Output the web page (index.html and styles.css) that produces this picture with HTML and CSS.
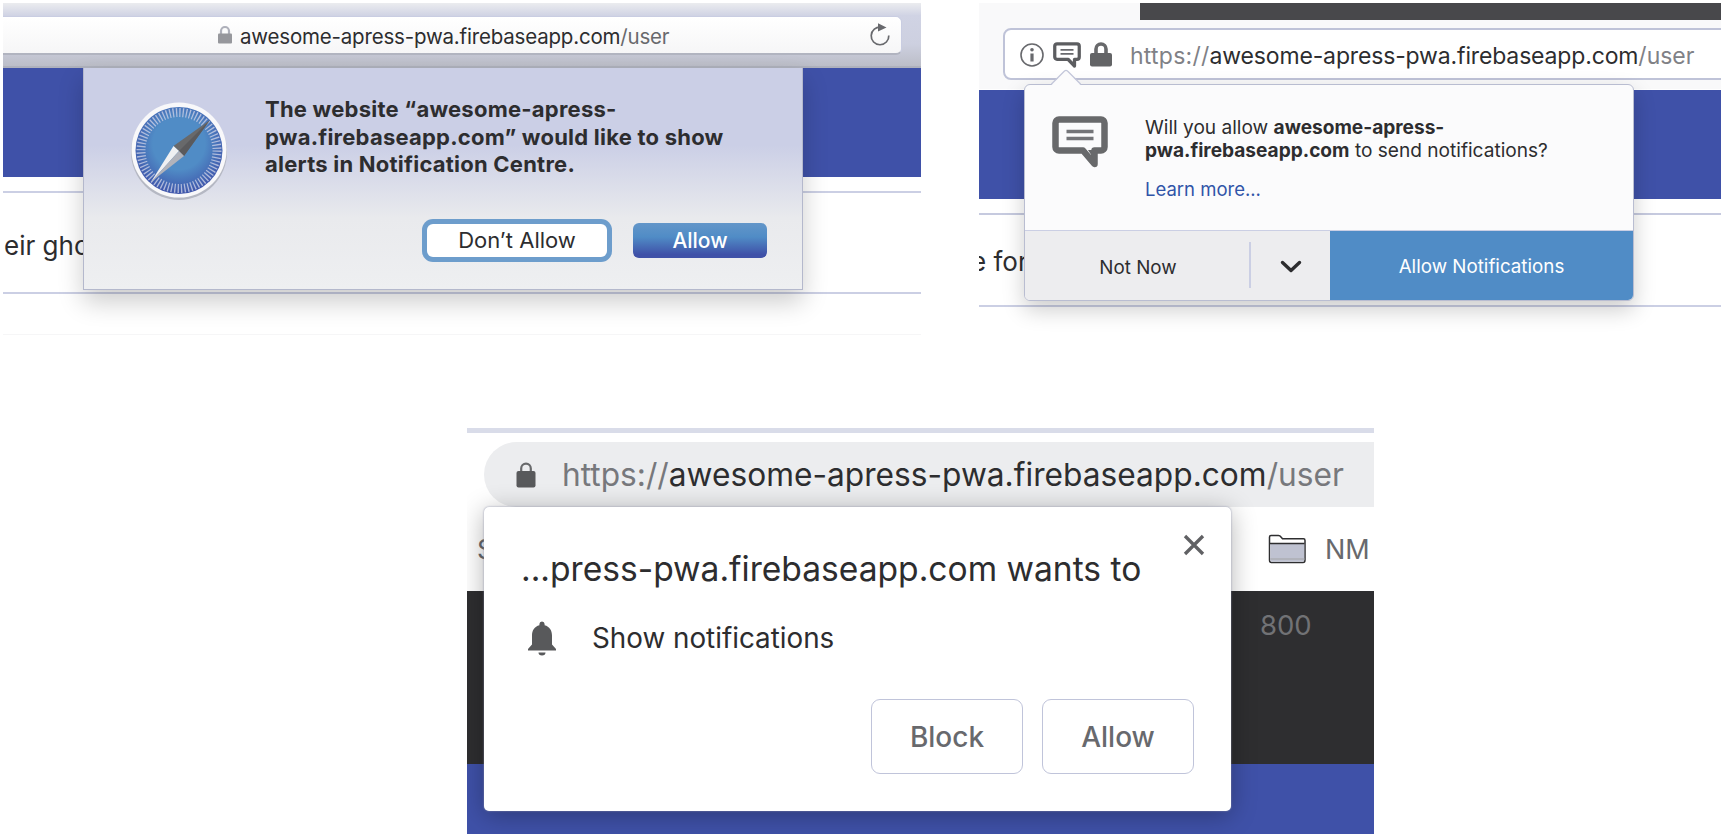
FILE: index.html
```html
<!DOCTYPE html>
<html lang="en">
<head>
<meta charset="utf-8">
<title>Notification permission prompts</title>
<link rel="stylesheet" href="styles.css">
</head>
<body>
<main class="page">
  <div class="row">
    <section class="safari">
      <header class="sf-toolbar">
        <div class="sf-field">
          <svg class="sf-lock" width="16" height="20" viewBox="0 0 16 20"><path d="M4 10V6a4 4 0 0 1 8 0v4" fill="none" stroke="#aeb0ba" stroke-width="2.2"/><rect x="1" y="8.5" width="14" height="10" rx="1" fill="#96979c"/></svg>
          <span class="sf-url">awesome-apress-pwa.firebaseapp.com<i>/user</i></span>
          <svg class="sf-reload" width="22" height="24" viewBox="0 0 22 24"><path d="M12 4.200A8.800 8.800 0 1 0 19.800 12.500" fill="none" stroke="#68696d" stroke-width="1.700"/><path d="M9 .2V8.400L17.500 4.600z" fill="#68696d"/></svg>
        </div>
      </header>
      <div class="sf-banner"></div>
      <div class="sf-card"><span>eir gho</span></div>
      <div class="sf-end"></div>
      <div class="sf-dialog">
        <svg class="compass" width="100" height="104" viewBox="0 0 100 104">
          <defs><radialGradient id="dial" cx=".5" cy=".42" r=".6"><stop offset=".5" stop-color="#508cc6"/><stop offset="1" stop-color="#3d50a8"/></radialGradient></defs>
          <circle cx="50" cy="52" r="48" fill="#b5b8c3"/>
          <circle cx="50" cy="50" r="47.500" fill="#f8f8fa"/>
          <circle cx="50" cy="50.500" r="43.500" fill="url(#dial)"/>
          <circle cx="50" cy="50.500" r="38" fill="none" stroke="#c9cee5" stroke-width="9" stroke-dasharray="1.300 2.016" opacity=".8"/>
          <path d="M81 20 44.500 46 55 56z" fill="#68696b"/>
          <path d="M81 20 50 51 55 56z" fill="#5a5a5d"/>
          <path d="M22 82 44.500 46 50 51z" fill="#eff0f2"/>
          <path d="M22 82 50 51 55 56z" fill="#b1b3bb"/>
        </svg>
        <div class="sf-body">
          <p>The website “awesome-apress-<br>pwa.firebaseapp.com” would like to show<br>alerts in Notification Centre.</p>
          <div class="sf-actions"><button class="sf-deny">Don’t Allow</button><button class="sf-allow">Allow</button></div>
        </div>
      </div>
    </section>

    <section class="firefox">
      <div class="ff-tabs"></div>
      <div class="ff-field">
        <svg width="24" height="24" viewBox="0 0 24 24"><circle cx="12" cy="12" r="11" fill="none" stroke="#68696d" stroke-width="1.600"/><circle cx="12" cy="6.800" r="1.800" fill="#68696d"/><path d="M12 10.500v8" stroke="#68696d" stroke-width="3.200"/></svg>
        <svg class="ff-mini" width="28" height="26" viewBox="0 0 56 52"><path d="M8 3.500H48a4.500 4.500 0 0 1 4.500 4.500V30a4.500 4.500 0 0 1-4.500 4.500H43V48L30 34.500H8A4.500 4.500 0 0 1 3.500 30V8A4.500 4.500 0 0 1 8 3.500z" fill="none" stroke="#5c5d60" stroke-width="6.500" stroke-linejoin="round"/><path d="M15 15.500H41M15 23.500H41" stroke="#68696d" stroke-width="3.500"/></svg>
        <svg class="ff-lock" width="22" height="25" viewBox="0 0 22 25"><path d="M6 12V7a5 5 0 0 1 10 0v5" fill="none" stroke="#68696b" stroke-width="3.600"/><rect x="0" y="11" width="22" height="13.500" rx="2" fill="#636466"/></svg>
        <span class="ff-url"><i class="ff-scheme">https://</i>awesome-apress-pwa.firebaseapp.com<i>/user</i></span>
      </div>
      <div class="ff-banner"></div>
      <div class="ff-card"><span>e for</span></div>
      <div class="ff-popup">
        <svg class="ff-arrow" width="30" height="17" viewBox="0 0 30 17"><path d="M0 16.500 13.500 2.500Q15 1 16.500 2.500L30 16.500V17H0z" fill="#fbfbfc"/><path d="M0 15.500 13.500 2Q15 .8 16.500 2L30 15.500" fill="none" stroke="#c3c7da" stroke-width="1.300"/></svg>
        <div class="ff-body">
          <svg width="56" height="53" viewBox="0 0 56 53"><path d="M7 3.500H49a3.500 3.500 0 0 1 3.500 3.500V31a3.500 3.500 0 0 1-3.500 3.500H42.500V48L31 34.500H7A3.500 3.500 0 0 1 3.500 31V7A3.500 3.500 0 0 1 7 3.500z" fill="none" stroke="#68696b" stroke-width="6.500" stroke-linejoin="round"/><path d="M36 34 43 45V34z" fill="#68696b"/><path d="M14.500 15.500H41.500M14.500 22.500H41.500" stroke="#747579" stroke-width="3.400"/></svg>
          <div class="ff-text">
            <p>Will you allow <b>awesome-apress-</b><br><b>pwa.firebaseapp.com</b> to send notifications?</p>
            <a>Learn more...</a>
          </div>
        </div>
        <div class="ff-footer">
          <div class="ff-notnow">Not Now</div>
          <div class="ff-more"><svg width="22" height="14" viewBox="0 0 22 14"><path d="M2.500 2.500 11 10.500 19.500 2.500" fill="none" stroke="#2d2d2f" stroke-width="3.400" stroke-linecap="round" stroke-linejoin="round"/></svg></div>
          <div class="ff-allow">Allow Notifications</div>
        </div>
      </div>
    </section>
  </div>

  <section class="chrome">
    <div class="cr-line"></div>
    <div class="cr-omni">
      <svg width="20" height="26" viewBox="0 0 20 26"><path d="M5.200 10V6.500a4.800 4.800 0 0 1 9.600 0V10" fill="none" stroke="#68696b" stroke-width="2.200"/><rect x=".5" y="9" width="19" height="16.500" rx="2" fill="#58595b"/></svg>
      <span class="cr-url"><i>https://</i>awesome-apress-pwa.firebaseapp.com<i>/user</i></span>
    </div>
    <div class="cr-marks">
      <span class="cr-s">S</span>
      <svg class="cr-folder" width="38" height="30" viewBox="0 0 38 30"><path d="M1.500 26V3Q1.500 1.500 3 1.500H10.500Q12 1.500 13 3L14.500 4.800H35.500Q37 4.800 37 6.500V26Q37 28.500 35 28.500H3.500Q1.500 28.500 1.500 26z" fill="#fff" stroke="#2e2e30" stroke-width="1.500"/><path d="M2.300 10H36.200V26Q36.200 27.700 35 27.700H3.500Q2.300 27.700 2.300 26z" fill="#bfc2d1"/><path d="M2 9.500H36.500" stroke="#2e2e30" stroke-width="1.600"/><path d="M2.300 25H36.200" stroke="#b1b3bb" stroke-width="2"/></svg>
      <span class="cr-nm">NM</span>
    </div>
    <div class="cr-dark"><span>800</span></div>
    <div class="cr-blue"></div>
    <div class="cr-popup">
      <svg class="cr-close" width="22" height="22" viewBox="0 0 22 22"><path d="M2 2 20 20M20 2 2 20" stroke="#606164" stroke-width="3.300"/></svg>
      <h1>...press-pwa.firebaseapp.com wants to</h1>
      <div class="cr-perm">
        <svg width="28" height="35" viewBox="0 0 28 35"><path d="M14 .5A2.600 2.600 0 0 1 16.600 3V4.300C21.500 5.600 24 9.500 24 14.500V23.500L28 28V29.500H0V28L4 23.500V14.500C4 9.500 6.500 5.600 11.400 4.300V3A2.600 2.600 0 0 1 14 .5z" fill="#58595b"/><path d="M10.500 31.500H17.500A3.500 3 0 0 1 10.500 31.500z" fill="#58595b"/></svg>
        <span>Show notifications</span>
      </div>
      <div class="cr-actions"><button>Block</button><button>Allow</button></div>
    </div>
  </section>
</main>
</body>
</html>
```
FILE: styles.css
```css
* { box-sizing: border-box; }
body { margin: 0; background: #fff; color: #2d2d2f; font-family: Inter, "Liberation Sans", sans-serif; }
i { font-style: normal; }
p, h1 { margin: 0; }
button { font-family: inherit; padding: 0; margin: 0; white-space: nowrap; }
span, p, h1, a { white-space: nowrap; }
svg { display: block; flex: none; }
.page { width: 1725px; height: 837px; overflow: hidden; padding: 3px 4px 3px 3px; display: flex; flex-direction: column; gap: 65px; }
.row { display: flex; justify-content: space-between; height: 360px; }

/* Safari */
.safari { position: relative; width: 918px; height: 348px; overflow: hidden; }
.sf-toolbar { height: 65px; padding-top: 13px; background: linear-gradient(#ebecef, #d0d3e4 20%, #cdd0e0 65%, #bcbec8); border-bottom: 2px solid #aeb1bc; }
.sf-field { display: flex; align-items: center; width: 899px; height: 39px; padding: 0 11px 0 214px; background: linear-gradient(#fff, #f6f6f7); border: 1px solid #c9cde2; border-left: 0; border-bottom: 2px solid #b1b4c0; border-radius: 0 6px 6px 0; }
.sf-url { margin: 3px 0 0 7px; font-size: 20.500px; letter-spacing: -.19px; }
.sf-url i { color: #68696d; }
.sf-reload { margin-left: auto; margin-right: -1px; }
.sf-banner { height: 109px; background: #3f51a8; }
.sf-card { margin-top: 14px; height: 103px; border-top: 2px solid #cbcfe4; border-bottom: 2px solid #cbcfe4; display: flex; align-items: center; padding: 6px 0 0 1px; font-size: 26px; }
.sf-end { height: 41px; border-bottom: 1px solid #f6f6f7; }
.sf-dialog { position: absolute; left: 80px; top: 65px; width: 720px; height: 222px; padding: 28px 35px 0 45px; display: flex; background: linear-gradient(#cbcfe6 0%, #cbcfe6 35%, #e9eaed 68%, #eeeff1 100%); border: 1px solid #b4b8cc; border-top: 0; box-shadow: 0 12px 24px rgba(0,0,0,.2); }
.compass { margin-top: 4px; }
.sf-body { flex: 1; margin-left: 36px; }
.sf-body p { font-weight: 700; font-size: 22px; letter-spacing: .23px; line-height: 27.600px; }
.sf-actions { display: flex; justify-content: flex-end; align-items: center; gap: 26px; margin-top: 44px; }
.sf-deny { width: 180px; height: 33px; border: 0; border-radius: 6px; background: #fff; color: #2d2d2f; font-size: 22px; box-shadow: 0 0 0 5px #6d9dcc; }
.sf-allow { width: 134px; height: 35px; border: 0; border-radius: 6px; background: linear-gradient(#6396c9, #508cc6 40%, #3f51a8 90%); color: #fff; font-size: 21px; font-weight: 500; }

/* Firefox */
.firefox { position: relative; width: 742px; height: 348px; overflow: hidden; background: linear-gradient(#f9f9fa 86px, #fff 86px); }
.ff-tabs { height: 17px; margin-left: 161px; background: #48484b; }
.ff-field { display: flex; align-items: center; height: 52px; width: 740px; margin: 8px 0 0 24px; padding: 1px 0 0 15px; background: #fff; border: 2px solid #bfc3d8; border-radius: 8px; }
.ff-mini { margin: 1px 0 0 9px; }
.ff-lock { margin-left: 9px; }
.ff-url { margin: 2px 0 0 18px; font-size: 23px; letter-spacing: -.15px; }
.ff-url i { color: #808186; letter-spacing: 0; }
.ff-url .ff-scheme { letter-spacing: .25px; }
.ff-banner { margin-top: 10px; height: 109px; background: #3f51a8; }
.ff-card { margin-top: 14px; height: 94px; border-top: 2px solid #c6cadf; border-bottom: 2px solid #cbcfe4; padding: 2px 0 0 0; display: flex; align-items: center; font-size: 26px; }
.ff-card span { margin-left: -8px; }
.ff-popup { position: absolute; left: 45px; top: 81px; width: 610px; height: 217px; border: 1.500px solid #b9bdd1; border-radius: 6px; background: #fbfbfc; box-shadow: 0 9px 22px rgba(0,0,0,.2); display: flex; flex-direction: column; }
.ff-arrow { position: absolute; left: 26px; top: -16px; }
.ff-body { flex: 1; display: flex; padding: 31px 0 0 27px; gap: 37px; }
.ff-text p { margin-top: 0; font-size: 19.100px; line-height: 23px; }
.ff-text a { display: block; margin-top: 16px; font-size: 18.500px; line-height: 23px; color: #3054a8; }
.ff-footer { height: 70px; display: flex; border-top: 1px solid #cbcfe4; background: #ededef; border-radius: 0 0 5px 5px; font-size: 18.800px; overflow: hidden; }
.ff-notnow { width: 226px; display: flex; align-items: center; justify-content: center; padding: 4px 0 0 2px; border-right: 2px solid #cbcfe4; margin: 11px 0 12px; }
.ff-more { width: 79px; display: flex; align-items: center; justify-content: center; padding-top: 2px; }
.ff-allow { flex: 1; background: #508cc6; color: #fff; display: flex; align-items: center; justify-content: center; padding-top: 2px; }

/* Chrome */
.chrome { position: relative; margin-left: 464px; width: 907px; height: 406px; overflow: hidden; }
.cr-line { height: 5px; background: #d9dce9; }
.cr-omni { display: flex; align-items: center; height: 65px; margin: 9px 0 0 17px; padding-left: 32px; background: #ecedef; border-radius: 33px 0 0 33px; }
.cr-url { margin-left: 26px; font-size: 31.700px; }
.cr-url i { color: #77787c; }
.cr-marks { height: 84px; display: flex; align-items: center; color: #68696d; font-size: 27px; background: #fff; }
.cr-s { margin-left: 10px; width: 20px; }
.cr-folder { margin-left: 771px; }
.cr-nm { margin-left: 19px; }
.cr-dark { height: 173px; background: #2e2e30; color: #717275; font-size: 27.500px; padding: 17px 0 0 793px; }
.cr-blue { height: 70px; background: #3f51a8; }
.cr-popup { position: absolute; left: 17px; top: 79px; width: 747px; height: 304px; padding: 0 37px 0 37px; background: #fff; border-radius: 5px; box-shadow: 0 0 2px #8d92ad, 0 4px 26px rgba(0,0,0,.3); }
.cr-close { position: absolute; right: 26px; top: 27px; }
.cr-popup h1 { margin-top: 42px; font-size: 33.600px; line-height: 40px; font-weight: 400; }
.cr-perm { display: flex; align-items: center; gap: 36px; margin: 32px 0 0 7px; font-size: 27.800px; height: 35px; }
.cr-perm span { margin-top: -2px; }
.cr-actions { display: flex; justify-content: flex-end; gap: 19px; margin-top: 43px; }
.cr-actions button { width: 152px; height: 75px; border: 1.500px solid #c0c4da; border-radius: 9px; background: #fff; color: #68696d; font-size: 28px; font-weight: 500; }
```
